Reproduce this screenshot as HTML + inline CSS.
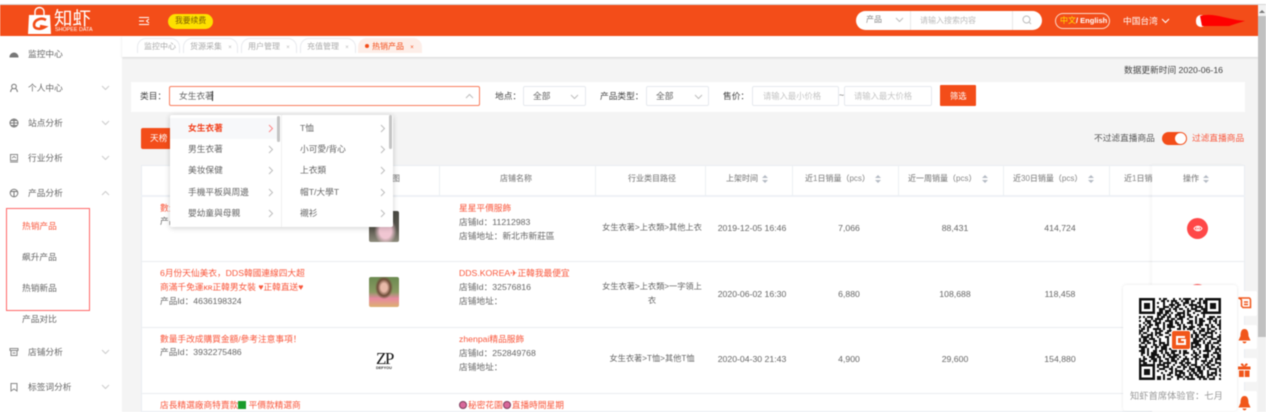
<!DOCTYPE html>
<html lang="zh"><head><meta charset="utf-8"><title>知虾</title>
<style>
html,body{margin:0;padding:0;width:1266px;height:412px;overflow:hidden;background:#fff}
#r{position:relative;width:1266px;height:412px;overflow:hidden;background:#f4f4f4;font:8.7px/12px "Liberation Sans","Noto Sans CJK SC",sans-serif;color:#666;filter:blur(.42px)}
.b,.t,svg.i{position:absolute}
.t{white-space:nowrap}
.c{transform:translateX(-50%)}
.o{color:#f9573c}
.h{color:#888;font-weight:500;font-size:8px}
.s{color:#666}
.n{font-size:8.2px}
.bx{position:absolute;box-sizing:border-box;background:#fff;border:1px solid #e6e9ee;border-radius:2px}
.tab{position:absolute;top:38px;height:15px;box-sizing:border-box;border:1px solid #e8eaee;border-bottom:0;border-radius:9px 9px 0 0;background:#fff;color:#aaa;font-size:8px;line-height:15px;padding-left:6px;white-space:nowrap}
.tab i{font-style:normal;color:#bbb;margin-left:4px;font-size:6px}
svg.i{fill:none;stroke:#bdbdbd;stroke-width:1}
.li{position:absolute;width:1px;background:#eceff3;top:165px;height:31px}
.ro{position:absolute;left:141px;width:1104px;height:1px;background:#ebedf0}
.g{display:inline-block;width:8px;height:8px;background:#1a9c2c;vertical-align:-1px}
.f{display:inline-block;width:8px;height:8px;border-radius:50%;background:#d8689a;border:1px solid #7d3b5a;box-sizing:border-box;vertical-align:-1px;margin-right:1px}
</style></head><body><div id="r">

<div class="b" style="left:0;top:0;width:1266px;height:5px;background:#fff;border-bottom:1px solid #d5d5d5;box-sizing:border-box"></div>
<div class="b" style="left:0;top:5px;width:1258px;height:31px;background:#f34d19"></div>
<div class="b" style="left:0;top:36px;width:122px;height:376px;background:#fff"></div>
<div class="b" style="left:122px;top:36px;width:1136px;height:21px;background:#fff;box-shadow:0 1px 2px rgba(0,0,0,.12)"></div>
<div class="b" style="left:1258px;top:5px;width:8px;height:407px;background:#f1f1f1"></div>
<div class="b" style="left:1258px;top:16px;width:8px;height:321px;background:#c1c1c1"></div>
<svg class="i" style="left:1259px;top:9px;stroke:none" width="6" height="5" viewBox="0 0 6 5"><path d="M0 4L3 1 6 4Z" fill="#777"/></svg>

<!-- logo -->
<svg class="i" style="left:27px;top:6px;stroke:none" width="25" height="29" viewBox="0 0 25 29"><path d="M2 9H23L24 28H1Z" fill="#fff"/><path d="M8 10V6C8 0 17 0 17 6V10" stroke="#fff" stroke-width="1.4" fill="none"/><path d="M19 14C14 11 7 14 7 19C7 23 13 24 18 21L13 20" stroke="#f34d19" stroke-width="2.6" fill="none"/></svg>
<div class="t" style="left:54px;top:9px;font-size:18.5px;line-height:20px;color:#fff">知虾</div>
<div class="t" style="left:55px;top:27px;font-size:5.4px;line-height:7px;color:#fff">SHOPEE DATA</div>
<svg class="i" style="left:138px;top:16px;stroke:#fff" width="12" height="10" viewBox="0 0 12 10"><path d="M1 1.500H11M1 5H6M1 8.500H11M11 3L8.500 5 11 7"/></svg>
<div class="b" style="left:168px;top:14px;width:45px;height:15px;border-radius:8px;background:#fde000"></div>
<div class="t" style="left:175px;top:15px;color:#7a5a00;font-size:7.800px">我要续费</div>

<!-- search -->
<div class="b" style="left:856px;top:11px;width:186px;height:19px;border-radius:10px;background:#fff"></div>
<div class="b" style="left:910px;top:11px;width:1px;height:19px;background:#e8e8e8"></div>
<div class="b" style="left:1012px;top:11px;width:1px;height:19px;background:#e8e8e8"></div>
<div class="t" style="left:866px;top:14px;color:#888;font-size:8px">产品</div>
<svg class="i" style="left:895px;top:17px" width="9" height="6" viewBox="0 0 9 6"><path d="M1 1L4.500 4.500 8 1"/></svg>
<div class="t" style="left:920px;top:15px;color:#bbb;font-size:8px">请输入搜索内容</div>
<svg class="i" style="left:1022px;top:15px" width="10" height="10" viewBox="0 0 10 10"><circle cx="4.500" cy="4.500" r="3.500"/><path d="M7 7L9 9"/></svg>
<div class="b" style="left:1055px;top:13px;width:55px;height:16px;border:1px solid #fdd9c8;border-radius:8px;box-sizing:border-box"></div>
<div class="t" style="left:1060px;top:15px;color:#fff;font-weight:700;font-size:7.500px"><span style="color:#fde000;font-weight:400;font-size:8px">中文</span>/ English</div>
<div class="t" style="left:1123px;top:15px;color:#fff">中国台湾</div>
<svg class="i" style="left:1161px;top:18px;stroke:#fff" width="9" height="6" viewBox="0 0 9 6"><path d="M1 1L4.500 4.500 8 1"/></svg>
<div class="b" style="left:1196px;top:15px;width:10px;height:12px;border-radius:5px;background:#fff"></div>
<svg class="i" style="left:1199px;top:14px;stroke:none" width="46" height="13" viewBox="0 0 46 13"><path d="M1 2C8 0 16 1 24 3L38 6 46 7 36 10 30 12 12 12 3 12Z" fill="#fe0000"/></svg>

<!-- tabs -->
<div class="tab" style="left:137px;width:43px">监控中心</div>
<div class="tab" style="left:183px;width:55px">货源采集 <i>×</i></div>
<div class="tab" style="left:241px;width:56px">用户管理 <i>×</i></div>
<div class="tab" style="left:300px;width:56px">充值管理 <i>×</i></div>
<div class="tab" style="left:358px;width:64px;background:#fdeee8;border-color:#fdeee8;color:#f34d19;padding-left:6px"><span style="display:inline-block;width:4px;height:4px;border-radius:50%;background:#f34d19;vertical-align:1px;margin-right:3px"></span>热销产品 <i style="color:#f34d19">×</i></div>

<!-- sidebar -->
<div class="t s" style="left:28px;top:48px">监控中心</div>
<div class="t s" style="left:28px;top:82px">个人中心</div>
<div class="t s" style="left:28px;top:117px">站点分析</div>
<div class="t s" style="left:28px;top:152px">行业分析</div>
<div class="t s" style="left:28px;top:187px">产品分析</div>
<div class="t o" style="left:22px;top:220px">热销产品</div>
<div class="t s" style="left:22px;top:251px">飙升产品</div>
<div class="t s" style="left:22px;top:282px">热销新品</div>
<div class="t s" style="left:22px;top:313px">产品对比</div>
<div class="t s" style="left:28px;top:346px">店铺分析</div>
<div class="t s" style="left:28px;top:381px">标签词分析</div>
<div class="b" style="left:6px;top:208px;width:84px;height:103px;border:1px solid #f66;box-sizing:border-box"></div>
<svg class="i" style="left:9px;top:49px;stroke:#777" width="10" height="10" viewBox="0 0 10 10"><path d="M1 8A4 4 0 0 1 9 8Z" fill="#777"/></svg>
<svg class="i" style="left:9px;top:83px;stroke:#777" width="10" height="10" viewBox="0 0 10 10"><circle cx="5" cy="3.500" r="2.300"/><path d="M1.500 9C2 6 3 6 3.500 5.500M8.500 9C8 6 7 6 6.500 5.500"/></svg>
<svg class="i" style="left:9px;top:118px;stroke:#777" width="10" height="10" viewBox="0 0 10 10"><circle cx="5" cy="5" r="4"/><path d="M1 5H9M5 1V9M2 2.500H8M2 7.500H8"/></svg>
<svg class="i" style="left:9px;top:153px;stroke:#888" width="10" height="10" viewBox="0 0 10 10"><rect x="1.500" y="1.500" width="7" height="6"/><path d="M1 9H9M3 5L5 3.500 7 5"/></svg>
<svg class="i" style="left:9px;top:188px;stroke:#777" width="10" height="10" viewBox="0 0 10 10"><circle cx="5" cy="5" r="3.800"/><path d="M2 3.500H8M5 3.500V9"/></svg>
<svg class="i" style="left:9px;top:347px;stroke:#888" width="10" height="10" viewBox="0 0 10 10"><path d="M1 1.500H9V3.500H1ZM2 3.500V8.500H8V3.500M3.500 6H6.500"/></svg>
<svg class="i" style="left:9px;top:382px;stroke:#888" width="10" height="10" viewBox="0 0 10 10"><path d="M2 1.500H8V9L5 7 2 9Z"/></svg>
<svg class="i" style="left:101px;top:85px;stroke:#ccc" width="9" height="6" viewBox="0 0 9 6"><path d="M1 1L4.500 4.500 8 1"/></svg>
<svg class="i" style="left:101px;top:120px;stroke:#ccc" width="9" height="6" viewBox="0 0 9 6"><path d="M1 1L4.500 4.500 8 1"/></svg>
<svg class="i" style="left:101px;top:155px;stroke:#ccc" width="9" height="6" viewBox="0 0 9 6"><path d="M1 1L4.500 4.500 8 1"/></svg>
<svg class="i" style="left:101px;top:190px;stroke:#ccc" width="9" height="6" viewBox="0 0 9 6"><path d="M1 5L4.500 1.500 8 5"/></svg>
<svg class="i" style="left:101px;top:349px;stroke:#ccc" width="9" height="6" viewBox="0 0 9 6"><path d="M1 1L4.500 4.500 8 1"/></svg>
<svg class="i" style="left:101px;top:384px;stroke:#ccc" width="9" height="6" viewBox="0 0 9 6"><path d="M1 1L4.500 4.500 8 1"/></svg>

<!-- filter -->
<div class="t" style="left:1124px;top:64px;color:#444">数据更新时间 2020-06-16</div>
<div class="b" style="left:131px;top:82px;width:1114px;height:30px;background:#fff"></div>
<div class="t" style="left:140px;top:90px;color:#444">类目：</div>
<div class="bx" style="left:169px;top:86px;width:311px;height:20px;border-color:#f87e5e"></div>
<div class="t" style="left:179px;top:90px">女生衣著</div>
<div class="b" style="left:212px;top:91px;width:1px;height:10px;background:#333"></div>
<svg class="i" style="left:465px;top:93px" width="9" height="6" viewBox="0 0 9 6"><path d="M1 5L4.500 1.500 8 5"/></svg>
<div class="t" style="left:495px;top:90px;color:#444">地点：</div>
<div class="bx" style="left:523px;top:86px;width:63px;height:20px"></div>
<div class="t" style="left:533px;top:90px">全部</div>
<svg class="i" style="left:570px;top:94px" width="9" height="6" viewBox="0 0 9 6"><path d="M1 1L4.500 4.500 8 1"/></svg>
<div class="t" style="left:600px;top:90px;color:#444">产品类型：</div>
<div class="bx" style="left:646px;top:86px;width:63px;height:20px"></div>
<div class="t" style="left:656px;top:90px">全部</div>
<svg class="i" style="left:694px;top:94px" width="9" height="6" viewBox="0 0 9 6"><path d="M1 1L4.500 4.500 8 1"/></svg>
<div class="t" style="left:723px;top:90px;color:#444">售价：</div>
<div class="bx" style="left:752px;top:86px;width:87px;height:20px"></div>
<div class="t" style="left:763px;top:90px;color:#c4c4c4;font-size:8.300px">请输入最小价格</div>
<div class="t" style="left:839px;top:89px;color:#666">~</div>
<div class="bx" style="left:844px;top:86px;width:88px;height:20px"></div>
<div class="t" style="left:854px;top:90px;color:#c4c4c4;font-size:8.300px">请输入最大价格</div>
<div class="b" style="left:940px;top:85px;width:36px;height:21px;background:#f34d19;border-radius:1px"></div>
<div class="t" style="left:950px;top:90px;color:#fff;font-size:8.300px">筛选</div>

<!-- toolbar -->
<div class="b" style="left:141px;top:128px;width:32px;height:21px;background:#f34d19;border-radius:2px"></div>
<div class="t" style="left:150px;top:132px;color:#fff">天榜</div>
<div class="t" style="left:1094px;top:132px;color:#555">不过滤直播商品</div>
<div class="b" style="left:1162px;top:132px;width:25px;height:13px;border-radius:7px;background:#f34d19"></div>
<div class="b" style="left:1175px;top:133px;width:11px;height:11px;border-radius:50%;background:#fff"></div>
<div class="t o" style="left:1192px;top:132px">过滤直播商品</div>

<!-- table -->
<div class="b" style="left:141px;top:165px;width:1104px;height:247px;background:#fff;box-shadow:inset 0 0 0 1px #e9edf2"></div>
<div class="b" style="left:141px;top:195px;width:1104px;height:2px;background:#eef1f6"></div>
<div class="li" style="left:439px"></div><div class="li" style="left:595px"></div><div class="li" style="left:705px"></div><div class="li" style="left:792px"></div><div class="li" style="left:898px"></div><div class="li" style="left:1003px"></div><div class="li" style="left:1109px"></div>
<div class="ro" style="top:261px"></div><div class="ro" style="top:327px"></div><div class="ro" style="top:393px"></div>

<div class="t h" style="left:392px;top:173px">图</div>
<div class="t h c" style="left:516px;top:173px">店铺名称</div>
<div class="t h c" style="left:652px;top:173px">行业类目路径</div>
<div class="t h" style="left:726px;top:173px">上架时间</div>
<div class="t h" style="left:805px;top:173px">近1日销量（pcs）</div>
<div class="t h" style="left:908px;top:173px">近一周销量（pcs）</div>
<div class="t h" style="left:1013px;top:173px">近30日销量（pcs）</div>
<div class="t h" style="left:1124px;top:173px">近1日销量</div>

<div class="t o" style="left:160px;top:202px">數量手改成購買金額</div>
<div class="t s" style="left:160px;top:215px">产品Id：</div>
<div class="b" style="left:369px;top:211px;width:30px;height:31px;border-radius:2px;background:radial-gradient(ellipse at 55% 65%,#f0c6d2 0 25%,transparent 48%),linear-gradient(180deg,#4a4a44 0,#5d5a50 60%,#8d8b7c 100%)"></div>

<div class="t o" style="left:160px;top:267px">6月份天仙美衣，DDS韓國連線四大超</div>
<div class="t o" style="left:160px;top:281px">商滿千免運ᴋʀ正韓男女裝 ♥正韓直送♥</div>
<div class="t s" style="left:160px;top:295px">产品Id：4636198324</div>
<div class="b" style="left:369px;top:277px;width:30px;height:30px;border-radius:2px;background:radial-gradient(ellipse at 50% 35%,#e8b9a8 0 15%,#6e4c38 30%,transparent 42%),linear-gradient(180deg,#6b8a50 0,#8a9a62 50%,#e88aa0 72%,#dcb070 100%)"></div>

<div class="t o" style="left:160px;top:333px">數量手改成購買金額/參考注意事項！</div>
<div class="t s" style="left:160px;top:346px">产品Id：3932275486</div>
<div class="t" style="left:376px;top:350px;font:17px/18px 'Liberation Serif',serif;color:#111;letter-spacing:-1.500px">ZP</div>
<div class="t" style="left:376px;top:366px;font:3.800px/5px 'Liberation Sans',sans-serif;color:#333;font-weight:700">DEFYOU</div>

<div class="t o" style="left:160px;top:399px">店長精選廠商特賣款<span class="g"></span> 平價款精選商</div>

<div class="t o" style="left:459px;top:202px">星星平價服飾</div>
<div class="t s" style="left:459px;top:216px">店铺Id：11212983</div>
<div class="t s" style="left:459px;top:230px">店铺地址：新北市新莊區</div>
<div class="t o" style="left:459px;top:267px">DDS.KOREA✈正韓我最便宜</div>
<div class="t s" style="left:459px;top:281px">店铺Id：32576816</div>
<div class="t s" style="left:459px;top:295px">店铺地址：</div>
<div class="t o" style="left:459px;top:333px">zhenpai精品服飾</div>
<div class="t s" style="left:459px;top:347px">店铺Id：252849768</div>
<div class="t s" style="left:459px;top:361px">店铺地址：</div>
<div class="t o" style="left:459px;top:399px"><span class="f"></span>秘密花園<span class="f"></span>直播時間星期</div>

<div class="t s c n" style="left:652px;top:222px">女生衣著&gt;上衣類&gt;其他上衣</div>
<div class="t s c n" style="left:652px;top:281px">女生衣著&gt;上衣類&gt;一字領上</div>
<div class="t s c n" style="left:652px;top:295px">衣</div>
<div class="t s c n" style="left:652px;top:353px">女生衣著&gt;T恤&gt;其他T恤</div>
<div class="t s c" style="left:752px;top:222px">2019-12-05 16:46</div>
<div class="t s c" style="left:752px;top:288px">2020-06-02 16:30</div>
<div class="t s c" style="left:752px;top:353px">2020-04-30 21:43</div>
<div class="t s c" style="left:849px;top:222px">7,066</div>
<div class="t s c" style="left:849px;top:288px">6,880</div>
<div class="t s c" style="left:849px;top:353px">4,900</div>
<div class="t s c" style="left:955px;top:222px">88,431</div>
<div class="t s c" style="left:955px;top:288px">108,688</div>
<div class="t s c" style="left:955px;top:353px">29,600</div>
<div class="t s c" style="left:1060px;top:222px">414,724</div>
<div class="t s c" style="left:1060px;top:288px">118,458</div>
<div class="t s c" style="left:1060px;top:353px">154,880</div>

<!-- sort icons -->
<svg width="0" height="0" style="position:absolute"><defs><g id="so"><path d="M0 3L3 0 6 3ZM0 5H6L3 8Z" fill="#b5bbc4" stroke="none"/></g></defs></svg>
<svg class="i" style="left:762px;top:175px" width="6" height="8"><use href="#so"/></svg>
<svg class="i" style="left:875px;top:175px" width="6" height="8"><use href="#so"/></svg>
<svg class="i" style="left:982px;top:175px" width="6" height="8"><use href="#so"/></svg>
<svg class="i" style="left:1088px;top:175px" width="6" height="8"><use href="#so"/></svg>

<!-- fixed column -->
<div class="b" style="left:1152px;top:165px;width:93px;height:247px;background:#fff;box-shadow:-2px 0 3px rgba(0,0,0,.04),inset -1px 0 0 #e9edf2,inset 0 1px 0 #e9edf2"></div>
<div class="b" style="left:1152px;top:195px;width:93px;height:2px;background:#eef1f6"></div>
<div class="b" style="left:1152px;top:261px;width:93px;height:1px;background:#ebedf0"></div>
<div class="b" style="left:1152px;top:327px;width:93px;height:1px;background:#ebedf0"></div>
<div class="b" style="left:1152px;top:393px;width:93px;height:1px;background:#ebedf0"></div>
<div class="t h" style="left:1183px;top:173px">操作</div>
<svg class="i" style="left:1203px;top:175px" width="6" height="8"><use href="#so"/></svg>
<div class="b" style="left:1187px;top:218px;width:21px;height:21px;border-radius:50%;background:#ff4848"></div>
<svg class="i" style="left:1193px;top:224px;stroke:#fff" width="10" height="9" viewBox="0 0 10 9"><path d="M1 4.500C3 1.500 7 1.500 9 4.500 7 7.500 3 7.500 1 4.500Z"/><circle cx="5" cy="4.500" r="1.300"/></svg>
<div class="b" style="left:1187px;top:284px;width:21px;height:21px;border-radius:50%;background:#ff4848"></div>

<!-- dropdown -->
<div class="b" style="left:170px;top:115px;width:223px;height:112px;background:#fff;border-radius:2px;box-shadow:0 1px 6px rgba(0,0,0,.2)"></div>
<div class="b" style="left:170px;top:118px;width:107px;height:21px;background:#f7f8fa"></div>
<div class="b" style="left:281px;top:115px;width:1px;height:112px;background:#f0f0f0"></div>
<div class="b" style="left:277px;top:116px;width:3px;height:26px;border-radius:2px;background:#c4c4c4"></div>
<div class="b" style="left:389px;top:115px;width:3px;height:34px;border-radius:2px;background:#c4c4c4"></div>
<div class="t o" style="left:188px;top:122px;font-weight:700;color:#f2401c">女生衣著</div>
<div class="t s" style="left:188px;top:143px">男生衣著</div>
<div class="t s" style="left:188px;top:164px">美妆保健</div>
<div class="t s" style="left:188px;top:186px">手機平板與周邊</div>
<div class="t s" style="left:188px;top:207px">嬰幼童與母親</div>
<div class="t s" style="left:300px;top:122px">T恤</div>
<div class="t s" style="left:300px;top:143px">小可愛/背心</div>
<div class="t s" style="left:300px;top:164px">上衣類</div>
<div class="t s" style="left:300px;top:186px">帽T/大學T</div>
<div class="t s" style="left:300px;top:207px">襯衫</div>
<svg class="i" style="left:268px;top:124px;stroke:#f88" width="6" height="9" viewBox="0 0 6 9"><path d="M1 1L4.500 4.500 1 8"/></svg>
<svg class="i" style="left:268px;top:145px" width="6" height="9" viewBox="0 0 6 9"><path d="M1 1L4.500 4.500 1 8"/></svg>
<svg class="i" style="left:268px;top:166px" width="6" height="9" viewBox="0 0 6 9"><path d="M1 1L4.500 4.500 1 8"/></svg>
<svg class="i" style="left:268px;top:188px" width="6" height="9" viewBox="0 0 6 9"><path d="M1 1L4.500 4.500 1 8"/></svg>
<svg class="i" style="left:268px;top:209px" width="6" height="9" viewBox="0 0 6 9"><path d="M1 1L4.500 4.500 1 8"/></svg>
<svg class="i" style="left:380px;top:124px" width="6" height="9" viewBox="0 0 6 9"><path d="M1 1L4.500 4.500 1 8"/></svg>
<svg class="i" style="left:380px;top:145px" width="6" height="9" viewBox="0 0 6 9"><path d="M1 1L4.500 4.500 1 8"/></svg>
<svg class="i" style="left:380px;top:166px" width="6" height="9" viewBox="0 0 6 9"><path d="M1 1L4.500 4.500 1 8"/></svg>
<svg class="i" style="left:380px;top:188px" width="6" height="9" viewBox="0 0 6 9"><path d="M1 1L4.500 4.500 1 8"/></svg>
<svg class="i" style="left:380px;top:209px" width="6" height="9" viewBox="0 0 6 9"><path d="M1 1L4.500 4.500 1 8"/></svg>

<!-- side tools -->
<div class="b" style="left:1236px;top:291px;width:21px;height:25px;background:#fff;border-radius:2px"></div>
<div class="b" style="left:1236px;top:325px;width:21px;height:24px;background:#fff;border-radius:2px"></div>
<div class="b" style="left:1236px;top:358px;width:21px;height:24px;background:#fff;border-radius:2px"></div>
<div class="b" style="left:1236px;top:391px;width:21px;height:21px;background:#fff;border-radius:2px"></div>
<svg class="i" style="left:1238px;top:297px;stroke:#f1561a;stroke-width:1.500" width="14" height="12" viewBox="0 0 14 12"><path d="M.5 1H11C12.500 1 12.500 2.500 12.500 4V10.500H5L3.500 9V3.500C3.500 2 2 1.500 .5 1ZM6 5H10M6 7.500H10"/></svg>
<svg class="i" style="left:1238px;top:329px;stroke:none" width="13" height="15" viewBox="0 0 13 15"><path d="M6.500 0C10 0 10.500 4 10.500 7L12.500 11.500H.5L2.500 7C2.500 4 3 0 6.500 0ZM4.500 12.500H8.500C8 15 5 15 4.500 12.500Z" fill="#f1561a"/></svg>
<svg class="i" style="left:1238px;top:363px;stroke:none" width="13" height="14" viewBox="0 0 13 14"><path d="M0 3.500H12.500V6.500H0ZM1 7.500H5.800V14H1ZM6.800 7.500H11.500V14H6.800ZM5.800 3.500C3 3 2 1 3.500.5 5 0 6 2 6.200 3.500 6.500 2 7.500 0 9 .5 10.500 1 9.500 3 6.800 3.500Z" fill="#f1561a"/></svg>
<svg class="i" style="left:1238px;top:396px;stroke:none" width="13" height="15" viewBox="0 0 13 15"><path d="M6.500 0C10 0 10.500 4 10.500 7L12.500 11.500H.5L2.500 7C2.500 4 3 0 6.500 0ZM4.500 12.500H8.500C8 15 5 15 4.500 12.500Z" fill="#f1561a"/></svg>

<!-- QR popup -->
<div class="b" style="left:1123px;top:285px;width:114px;height:126px;background:#fff;border-radius:3px;box-shadow:0 0 3px rgba(0,0,0,.1)"></div>
<svg class="i" style="left:1139px;top:298px;stroke:none" width="82" height="82" viewBox="0 0 41 41" shape-rendering="crispEdges">
<path fill="none" stroke="#111" stroke-width="1" stroke-dasharray="2 1 1 2 3 1 1 1 2 3 1 2 1 1 4 2 1 1 2 1 3 2 1 3 1 1 2 2 3 1 1 2 2 1" d="M0 .5H41V1.500H0V2.500H41V3.500H0V4.500H41V5.500H0V6.500H41V7.500H0V8.500H41V9.500H0V10.500H41V11.500H0V12.500H41V13.500H0V14.500H41V15.500H0V16.500H41V17.500H0V18.500H41V19.500H0V20.500H41V21.500H0V22.500H41V23.500H0V24.500H41V25.500H0V26.500H41V27.500H0V28.500H41V29.500H0V30.500H41V31.500H0V32.500H41V33.500H0V34.500H41V35.500H0V36.500H41V37.500H0V38.500H41V39.500H0V40.500H41"/>
<g id="fp"><rect width="9" height="9" fill="#fff"/><rect width="8" height="8" fill="#111"/><rect x="1.200" y="1.200" width="5.600" height="5.600" fill="#fff"/><rect x="2.500" y="2.500" width="3" height="3" fill="#111"/></g>
<use href="#fp" transform="translate(33 0) scale(.99)"/><use href="#fp" transform="translate(0 33)"/>
<rect x="16" y="16" width="10" height="10" rx="1" fill="#fff"/><rect x="16.500" y="16.500" width="9" height="9" rx="1" fill="#f1561a"/>
<path d="M23 19.500H19V23H23V21H21" fill="none" stroke="#fff" stroke-width="1"/>
</svg>
<div class="t" style="left:1130px;top:390px;color:#999;font-size:9.200px;letter-spacing:.1px">知虾首席体验官：七月</div>

</div></body></html>
